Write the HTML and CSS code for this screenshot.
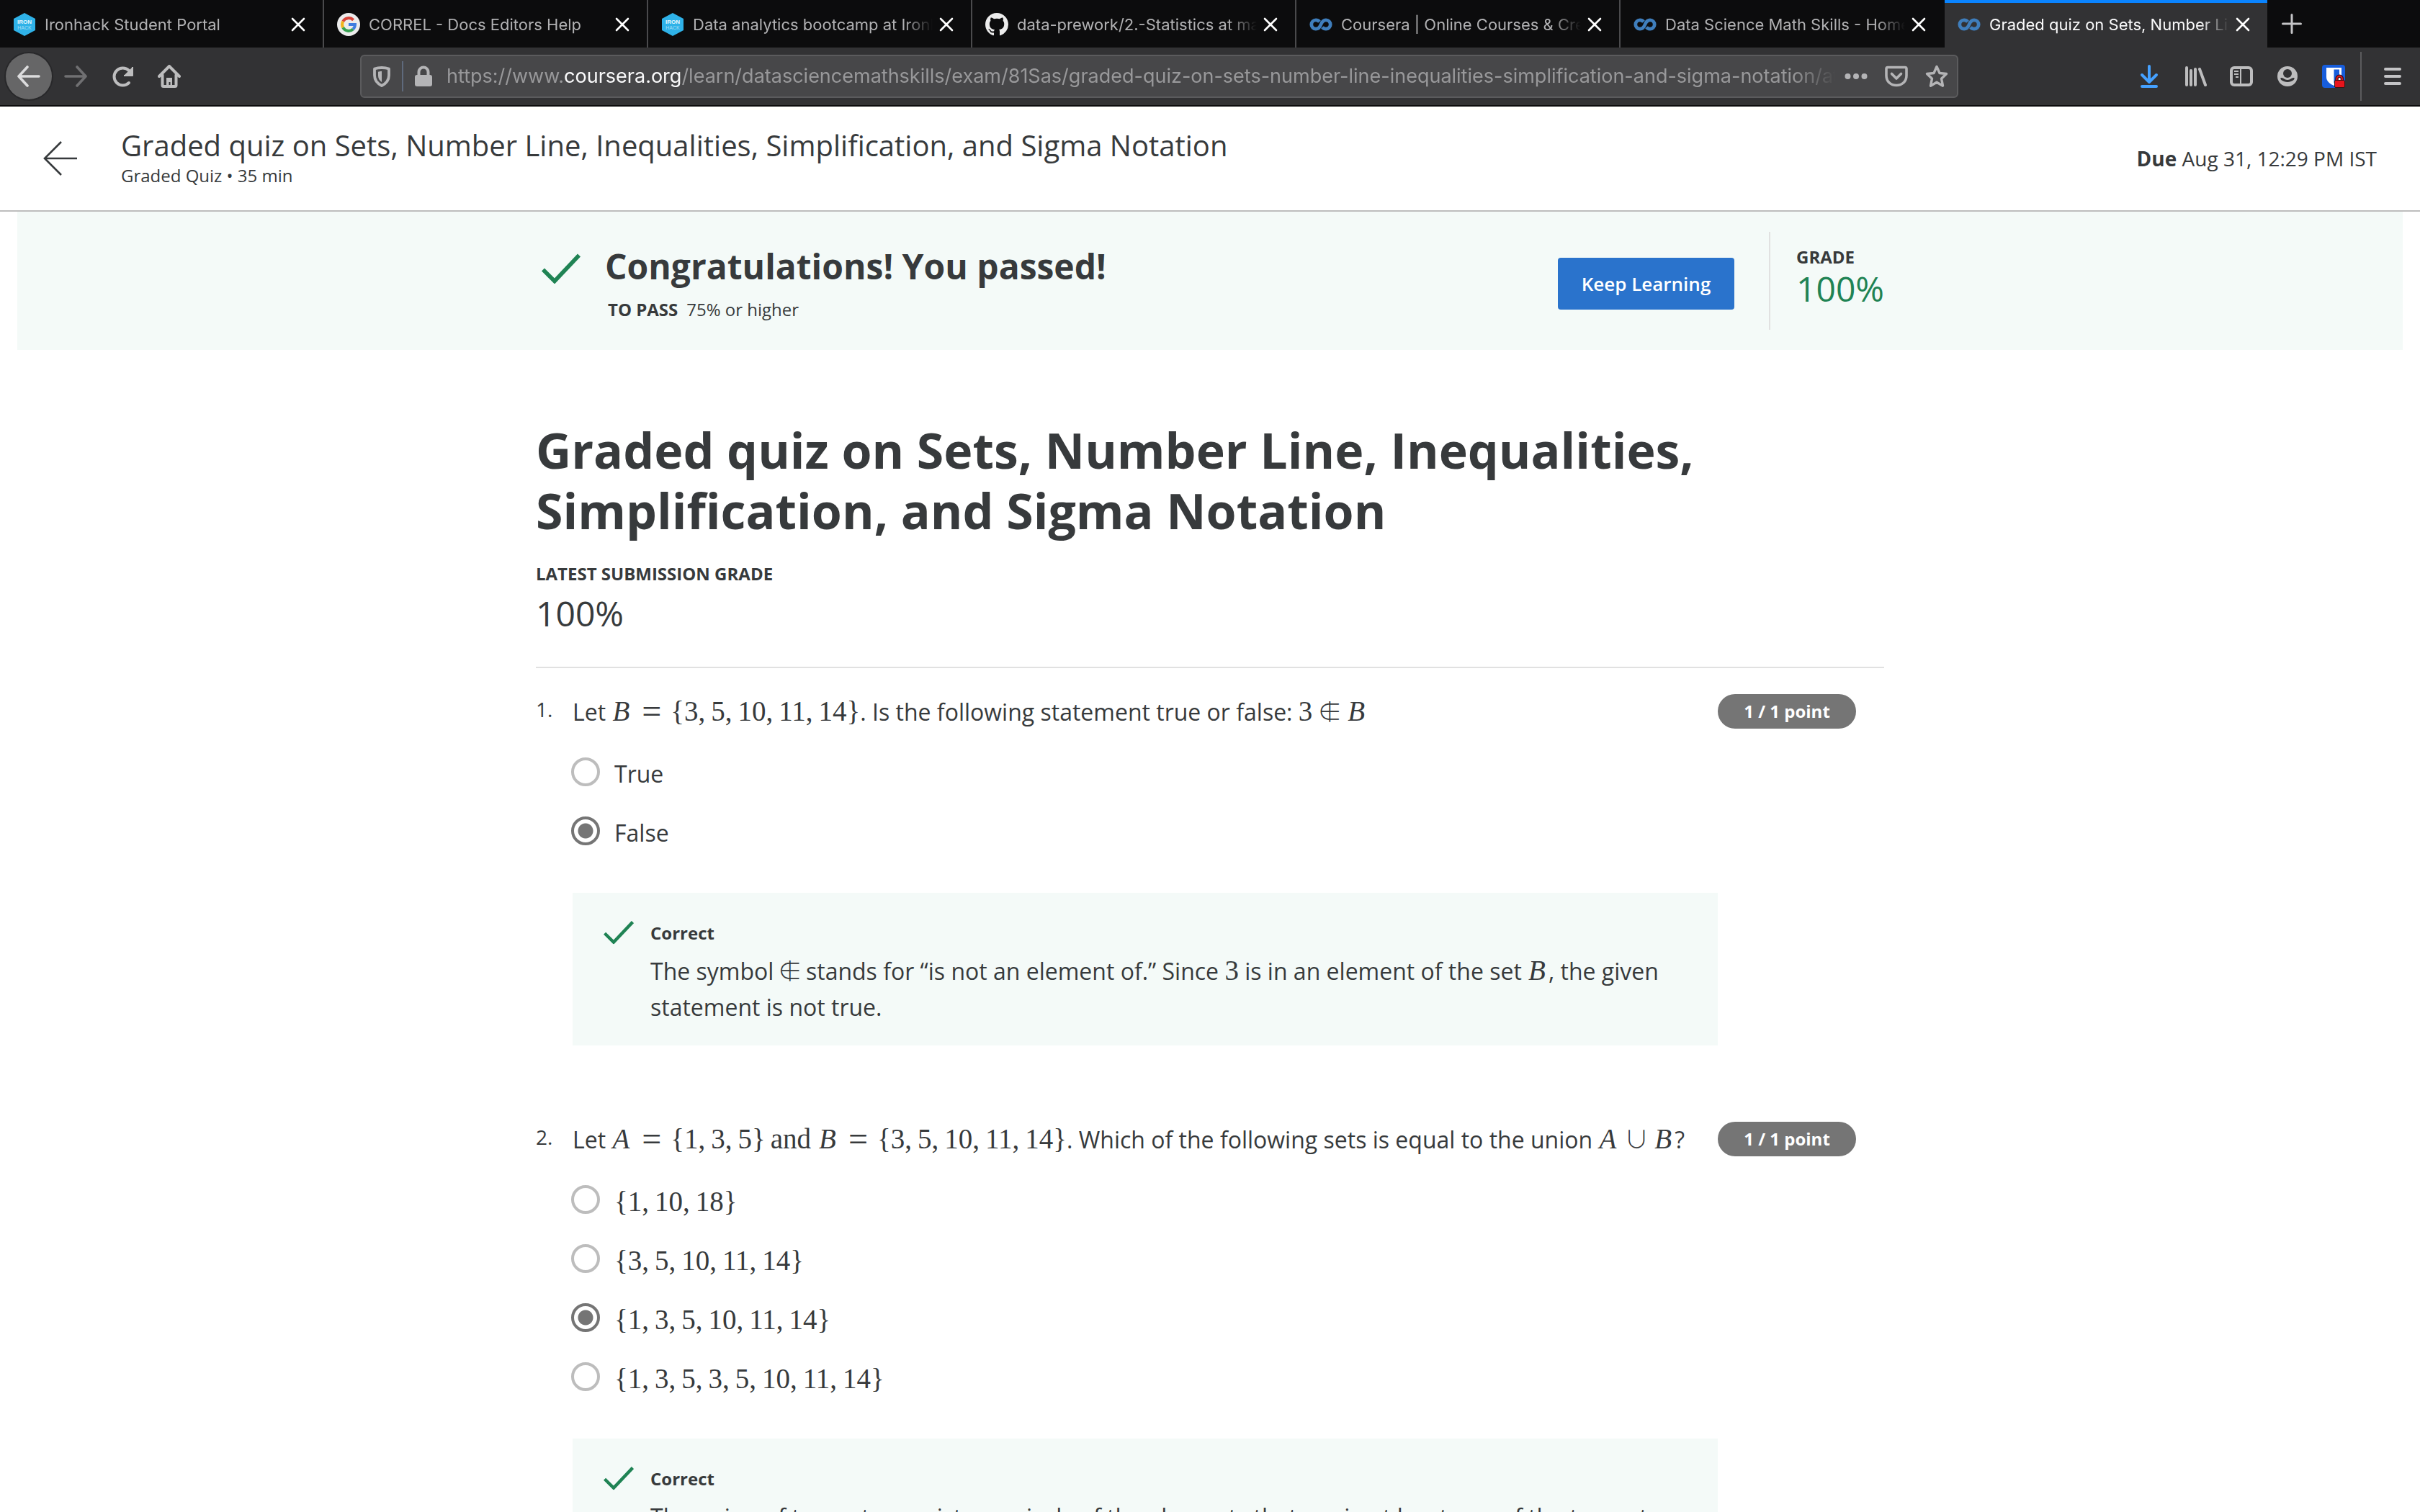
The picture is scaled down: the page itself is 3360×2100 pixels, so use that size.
FILE: index.html
```html
<!DOCTYPE html>
<html lang="en">
<head>
<meta charset="utf-8">
<title>Graded quiz on Sets, Number Line, Inequalities, Simplification, and Sigma Notation</title>
<link rel="stylesheet" href="styles.css">
</head>
<body>
<svg class="sprite" aria-hidden="true">
  <symbol id="close" viewBox="0 0 22 22"><path d="M3 3l16 16M19 3L3 19" fill="none" stroke="#fff" stroke-width="2.6" stroke-linecap="round"/></symbol>
  <symbol id="coursera" viewBox="0 0 32 32"><path d="M14 12.2C12.800 10.700 11 9.800 9 9.800a6.200 6.200 0 1 0 0 12.400c3.500 0 5.500-2.200 7-6.200s3.500-6.200 7-6.200a6.200 6.200 0 1 1 0 12.400c-2 0-3.800-.9-5-2.400" fill="none" stroke="#3f7ebc" stroke-width="4.800"/></symbol>
  <symbol id="check" viewBox="0 0 54 42"><path d="M2 22.500l16 16L52 2.500" fill="none" stroke="#1f8354" stroke-width="5.600"/></symbol>
</svg>

<nav class="tabs" aria-label="Tabs">
  <div class="tab"><svg class="favicon" viewBox="0 0 32 32"><path d="M16 0l15 8v16l-15 8-15-8V8z" fill="#2fb2e8"/><text x="16" y="15" font-size="8" font-weight="700" text-anchor="middle" fill="#e8f7fd">IRON</text><text x="16" y="23" font-size="7" text-anchor="middle" fill="#a5def5">HACK</text></svg><a class="tab-title" href="#t1">Ironhack Student Portal</a><button class="close" aria-label="Close tab"><svg><use href="#close"/></svg></button></div>
  <div class="tab"><svg class="favicon" viewBox="0 0 32 32"><circle cx="16" cy="16" r="16" fill="#ececec"/><g fill="none" stroke-width="4"><path d="M8.200 11.700A9 9 0 0 1 22.600 9.900" stroke="#d9453a"/><path d="M8.200 20.300a9 9 0 0 1 0-8.600" stroke="#f2b41c"/><path d="M22.200 22.500A9 9 0 0 1 8.200 20.300" stroke="#35a150"/><path d="M16 16h9a9 9 0 0 1-2.800 6.500" stroke="#3f7de0"/></g></svg><a class="tab-title" href="#t2">CORREL - Docs Editors Help</a><button class="close" aria-label="Close tab"><svg><use href="#close"/></svg></button></div>
  <div class="tab"><svg class="favicon" viewBox="0 0 32 32"><path d="M16 0l15 8v16l-15 8-15-8V8z" fill="#2fb2e8"/><text x="16" y="15" font-size="8" font-weight="700" text-anchor="middle" fill="#e8f7fd">IRON</text><text x="16" y="23" font-size="7" text-anchor="middle" fill="#a5def5">HACK</text></svg><a class="tab-title" href="#t3">Data analytics bootcamp at Ironhack</a><button class="close" aria-label="Close tab"><svg><use href="#close"/></svg></button></div>
  <div class="tab"><svg class="favicon" viewBox="0 0 16 16"><path fill="#ececec" d="M8 0C3.580 0 0 3.580 0 8c0 3.540 2.290 6.530 5.470 7.590.4.070.55-.17.55-.38 0-.19-.01-.82-.01-1.490-2.010.37-2.530-.49-2.690-.94-.09-.23-.48-.94-.82-1.130-.28-.15-.68-.52-.01-.53.63-.01 1.080.58 1.230.82.72 1.210 1.870.87 2.330.66.070-.52.28-.87.51-1.070-1.780-.2-3.640-.89-3.640-3.950 0-.87.31-1.590.82-2.150-.08-.2-.36-1.020.08-2.120 0 0 .67-.21 2.200.82.64-.18 1.320-.27 2-.27s1.360.090 2 .27c1.530-1.040 2.200-.82 2.200-.82.44 1.100.16 1.920.08 2.120.51.56.82 1.270.82 2.150 0 3.070-1.870 3.750-3.650 3.950.29.25.54.73.54 1.480 0 1.070-.01 1.930-.01 2.200 0 .21.15.46.55.38A8.010 8.010 0 0 0 16 8c0-4.420-3.580-8-8-8z"/></svg><a class="tab-title" href="#t4">data-prework/2.-Statistics at master</a><button class="close" aria-label="Close tab"><svg><use href="#close"/></svg></button></div>
  <div class="tab"><svg class="favicon"><use href="#coursera"/></svg><a class="tab-title" href="#t5">Coursera | Online Courses &amp; Credentials</a><button class="close" aria-label="Close tab"><svg><use href="#close"/></svg></button></div>
  <div class="tab"><svg class="favicon"><use href="#coursera"/></svg><a class="tab-title" href="#t6">Data Science Math Skills - Home</a><button class="close" aria-label="Close tab"><svg><use href="#close"/></svg></button></div>
  <div class="tab active"><svg class="favicon"><use href="#coursera"/></svg><a class="tab-title" href="#t7">Graded quiz on Sets, Number Line</a><button class="close" aria-label="Close tab"><svg><use href="#close"/></svg></button></div>
  <button class="new-tab" aria-label="New tab"><svg viewBox="0 0 28 28"><path d="M14 1.500v25M1.500 14h25" stroke="#c4c4c6" stroke-width="3" stroke-linecap="round"/></svg></button>
</nav>

<div class="toolbar">
  <div class="tools nav-tools">
    <button class="tool back" aria-label="Back"><svg viewBox="0 0 32 32"><path d="M30 16H2M14 3L2 16l12 13" fill="none" stroke="#dcdcdd" stroke-width="3.600" stroke-linecap="round" stroke-linejoin="round"/></svg></button>
    <button class="tool" aria-label="Forward"><svg viewBox="0 0 32 32"><path d="M2 16h28M18 3l12 13-12 13" fill="none" stroke="#707072" stroke-width="3.600" stroke-linecap="round" stroke-linejoin="round"/></svg></button>
    <button class="tool" aria-label="Reload"><svg viewBox="0 0 32 32"><path d="M25 25a12 12 0 1 1 0-17l3 4" fill="none" stroke="#bdbdbe" stroke-width="4" stroke-linecap="round"/><path d="M30 3v12H18" fill="#bdbdbe" stroke="#bdbdbe" stroke-width="2" stroke-linejoin="round"/></svg></button>
    <button class="tool" aria-label="Home"><svg viewBox="0 0 32 32"><path d="M2 16L16 2l14 14M6.500 14v14.500q0 1.500 1.500 1.500h16q1.500 0 1.500-1.500V14" fill="none" stroke="#bdbdbe" stroke-width="4" stroke-linecap="round" stroke-linejoin="round"/><path d="M12 30V18h8v12h-2.500v-6h-2v6z" fill="#bdbdbe"/></svg></button>
  </div>
  <div class="urlbar">
    <svg class="url-icon" viewBox="0 0 32 32"><path d="M16 4c4 0 7 .5 10 1.500v9c0 7-4 11.500-10 14.500-6-3-10-7.500-10-14.500v-9C9 4.500 12 4 16 4z" fill="none" stroke="#b4b4b6" stroke-width="3.800" stroke-linejoin="round"/><path d="M16 9c-2 0-4 .3-5 .8V15c0 4 2 7 5 9z" fill="#b4b4b6"/></svg>
    <span class="url-rule"></span>
    <svg class="url-icon" viewBox="0 0 32 32"><rect x="4" y="14" width="24" height="16" rx="3" fill="#b4b4b6"/><path d="M9.500 15V10a6.500 6.500 0 0 1 13 0v5" fill="none" stroke="#b4b4b6" stroke-width="4"/></svg>
    <div class="url" role="textbox" aria-label="Address" contenteditable="true" spellcheck="false">https://www.<span class="host">coursera.org</span>/learn/datasciencemathskills/exam/81Sas/graded-quiz-on-sets-number-line-inequalities-simplification-and-sigma-notation/attempt</div>
    <button class="url-tool" aria-label="Page actions"><svg viewBox="0 0 32 32" fill="#b4b4b6"><circle cx="4.500" cy="16" r="4"/><circle cx="16" cy="16" r="4"/><circle cx="27.500" cy="16" r="4"/></svg></button>
    <button class="url-tool" aria-label="Save to Pocket"><svg viewBox="0 0 32 32" fill="none" stroke="#b4b4b6" stroke-width="3.600" stroke-linejoin="round" stroke-linecap="round"><path d="M4 3.500h24q2 0 2 2V15c0 8-6 13.500-14 13.500S2 23 2 15V5.500q0-2 2-2z"/><path d="M9.500 12.500l6.500 6.500 6.500-6.500"/></svg></button>
    <button class="url-tool" aria-label="Bookmark"><svg viewBox="0 0 32 32"><path d="M16 2.500l4 9 9.500 1-7 6.700 2 10L16 24.200l-8.500 5 2-10-7-6.700 9.500-1z" fill="none" stroke="#b4b4b6" stroke-width="3.400" stroke-linejoin="round"/></svg></button>
  </div>
  <div class="tools">
    <button class="tool" aria-label="Downloads"><svg viewBox="0 0 32 32"><path d="M16 2v22M6 14l10 10 10-10M6 30h20" fill="none" stroke="#45a1ff" stroke-width="4" stroke-linecap="round" stroke-linejoin="round"/></svg></button>
    <button class="tool" aria-label="Library"><svg viewBox="0 0 32 32"><path d="M4 4v24M10 8v20M16 6v22M22 6l8 22" fill="none" stroke="#bdbdbe" stroke-width="4" stroke-linecap="round"/></svg></button>
    <button class="tool" aria-label="Sidebars"><svg viewBox="0 0 32 32"><rect x="2" y="4" width="28" height="24" rx="4" fill="none" stroke="#bdbdbe" stroke-width="4"/><path d="M15 4v24" stroke="#bdbdbe" stroke-width="2"/><path d="M6 9h6M6 13h6M8 17h4" stroke="#bdbdbe" stroke-width="2"/></svg></button>
    <button class="tool" aria-label="Account"><svg viewBox="0 0 32 32"><circle cx="16" cy="16" r="14" fill="#bdbdbe"/><circle cx="16" cy="12" r="6" fill="#323234"/><path d="M7.500 18c3.500 0 4 3 8.500 3s5-3 8.500-3c2 0 1 2.500-.5 3.500-2.200 1.600-5 2.500-8 2.500s-5.800-.9-8-2.500c-1.500-1-2.500-3.500-.5-3.500z" fill="#323234"/></svg></button>
    <button class="tool" aria-label="Password manager"><svg viewBox="0 0 32 32"><rect width="32" height="32" rx="4" fill="#175ddc"/><path d="M6 4h21v13c0 6-5 9.500-10.500 12C11 26.500 6 23 6 17z" fill="#fff"/><path d="M16.500 6.500h7.500V17c0 4-3 6.500-7.500 8.500z" fill="#175ddc"/><path d="M20.500 22v-2.500a3.700 3.700 0 0 1 7.400 0V22" fill="#fff" stroke="#3a1414" stroke-width="4.500"/><path d="M20.500 22v-2.500a3.700 3.700 0 0 1 7.400 0V22" fill="none" stroke="#e8141c" stroke-width="2"/><rect x="17.500" y="21.500" width="14" height="10" rx="1.500" fill="#e8141c" stroke="#3a1414"/></svg></button>
    <span class="tool-rule"></span>
    <button class="tool" aria-label="Open menu"><svg viewBox="0 0 32 32"><path d="M6 6h20M6 16h20M6 26h20" stroke="#c4c4c6" stroke-width="4" stroke-linecap="round"/></svg></button>
  </div>
</div>

<header class="page-head">
  <a class="head-back" href="#back" aria-label="Back"><svg viewBox="0 0 48 48"><path d="M47 24H2M25 1L2 24l23 23" fill="none" stroke="#373a3c" stroke-width="2.600"/></svg></a>
  <div class="head-text">
    <div class="head-title">Graded quiz on Sets, Number Line, Inequalities, Simplification, and Sigma Notation</div>
    <div class="head-sub">Graded Quiz • 35 min</div>
  </div>
  <div class="due"><b>Due</b> Aug 31, 12:29 PM IST</div>
</header>

<main>
  <section class="banner">
    <div class="banner-inner">
      <svg class="banner-check"><use href="#check"/></svg>
      <div class="banner-text">
        <h2>Congratulations! You passed!</h2>
        <p><b>TO PASS</b><span>75% or higher</span></p>
      </div>
      <button class="keep">Keep Learning</button>
      <div class="grade"><b>GRADE</b><span>100%</span></div>
    </div>
  </section>

  <article class="quiz">
    <h1>Graded quiz on Sets, Number Line, Inequalities, Simplification, and Sigma Notation</h1>
    <div class="latest">LATEST SUBMISSION GRADE</div>
    <div class="score">100%</div>

    <section class="question">
      <div class="num">1.</div>
      <div class="body">
        <div class="prompt">Let <span class="math"><i>B</i><span class="rel">=</span>{3<s>,</s>5<s>,</s>10<s>,</s>11<s>,</s>14}</span>. Is the following statement true or false: <span class="math">3<span class="sym">∉</span><i>B</i></span></div>
        <div class="options">
          <label><input type="radio" name="q1"><span>True</span></label>
          <label><input type="radio" name="q1" checked><span>False</span></label>
        </div>
        <div class="feedback">
          <svg class="fb-check" viewBox="0 0 54 42"><use href="#check"/></svg>
          <div><b>Correct</b><p>The symbol <span class="math"><span class="sym bare">∉</span></span> stands for “is not an element of.” Since <span class="math">3</span> is in an element of the set <span class="math"><i>B</i></span>, the given statement is not true.</p></div>
        </div>
      </div>
      <div class="points">1 / 1 point</div>
    </section>

    <section class="question">
      <div class="num">2.</div>
      <div class="body">
        <div class="prompt">Let <span class="math"><i>A</i><span class="rel">=</span>{1<s>,</s>3<s>,</s>5}<span class="word">and</span><i>B</i><span class="rel">=</span>{3<s>,</s>5<s>,</s>10<s>,</s>11<s>,</s>14}</span>. Which of the following sets is equal to the union <span class="math"><i>A</i><span class="sym">∪</span><i>B</i></span>?</div>
        <div class="options">
          <label><input type="radio" name="q2"><span class="math">{1<s>,</s>10<s>,</s>18}</span></label>
          <label><input type="radio" name="q2"><span class="math">{3<s>,</s>5<s>,</s>10<s>,</s>11<s>,</s>14}</span></label>
          <label><input type="radio" name="q2" checked><span class="math">{1<s>,</s>3<s>,</s>5<s>,</s>10<s>,</s>11<s>,</s>14}</span></label>
          <label><input type="radio" name="q2"><span class="math">{1<s>,</s>3<s>,</s>5<s>,</s>3<s>,</s>5<s>,</s>10<s>,</s>11<s>,</s>14}</span></label>
        </div>
        <div class="feedback">
          <svg class="fb-check" viewBox="0 0 54 42"><use href="#check"/></svg>
          <div><b>Correct</b><p>The union of two sets consists precisely of the elements that are in at least one of the two sets.</p></div>
        </div>
      </div>
      <div class="points">1 / 1 point</div>
    </section>
  </article>
</main>
</body>
</html>
```
FILE: styles.css
```css
* { box-sizing: border-box; }
body {
  margin: 0;
  height: 100vh;
  overflow: hidden;
  display: flex;
  flex-direction: column;
  background: #fff;
  color: #373a3c;
  font-family: "Open Sans", sans-serif;
  font-size: 32px;
}
button { border: 0; padding: 0; background: none; font: inherit; display: flex; align-items: center; justify-content: center; }
a { color: inherit; text-decoration: none; }
h1, h2, p { margin: 0; }
svg { display: block; }
.sprite { position: absolute; width: 0; height: 0; }

/* Browser tabs */
.tabs { flex: none; display: flex; height: 66px; background: #0c0c0d; font-family: Inter, sans-serif; font-size: 22px; color: #b1b1b3; }
.tab { flex: 0 1 450px; min-width: 0; display: flex; align-items: center; padding: 2px 23px 0 18px; border-right: 2px solid #4a4a4c; }
.tab:nth-child(6) { border-right-color: #0c0c0d; }
.tab.active { flex-basis: 448px; background: #323234; color: #f9f9fa; border-right: 0; border-top: 4px solid #0a84ff; padding-top: 0; padding-bottom: 2px; }
.favicon { flex: none; width: 32px; height: 32px; font-family: "Liberation Sans", sans-serif; }
.tab-title { flex: 1; min-width: 0; margin: 0 8px 0 12px; overflow: hidden; white-space: nowrap; line-height: 32px; -webkit-mask-image: linear-gradient(to left, transparent, #000 40px); mask-image: linear-gradient(to left, transparent, #000 40px); }
.close svg { width: 22px; height: 22px; }
.new-tab { width: 68px; }
.new-tab svg { width: 28px; height: 28px; }

/* Browser toolbar */
.toolbar { flex: none; display: flex; align-items: center; height: 82px; padding: 0 6px 0 8px; background: #323234; border-bottom: 2px solid #0c0c0d; }
.tools { flex: none; display: flex; align-items: center; }
.nav-tools { gap: 1px; }
.tool { width: 64px; height: 64px; }
.tool svg { width: 32px; height: 32px; }
.back { border-radius: 50%; background: #666667; box-shadow: 0 0 0 2px #28282a; }
.tool-rule { width: 2px; height: 68px; margin: 0 11px 0 5px; background: #5b5b5d; }
.urlbar { flex: 1; min-width: 0; display: flex; align-items: center; height: 60px; margin: 0 233px; padding: 0 12px; background: #474749; border: 2px solid #5b5b5d; border-radius: 6px; }
.url-icon { flex: none; width: 32px; height: 32px; }
.url-rule { flex: none; width: 2px; height: 42px; margin: 0 12px; background: #5f6a7c; }
.url { flex: 1; min-width: 0; margin: 0 12px 0 16px; overflow: hidden; white-space: nowrap; font-family: Inter, sans-serif; font-size: 27px; line-height: 40px; color: #98989a; -webkit-mask-image: linear-gradient(to left, transparent, #000 60px); mask-image: linear-gradient(to left, transparent, #000 60px); }
.host { color: #f9f9fa; }
.url-tool { flex: none; width: 32px; height: 32px; margin-left: 24px; }
.url-tool svg { width: 32px; height: 32px; }
.url + .url-tool { margin-left: 0; }

/* Quiz header */
.page-head { flex: none; display: flex; align-items: center; height: 146px; padding: 0 60px; border-bottom: 2px solid #bdbdbd; }
.head-back svg { width: 48px; height: 48px; }
.head-text { flex: 1; margin: 0 0 4px 60px; }
.head-title { font-size: 40px; line-height: 52px; }
.head-sub { font-size: 24px; line-height: 32px; }
.due { font-size: 28px; }

/* Result banner */
main { flex: 1; min-height: 0; overflow: hidden; }
.banner { margin: 0 24px; background: #f4faf8; }
.banner-inner { display: flex; align-items: center; max-width: 1872px; height: 192px; margin: 0 auto; padding-left: 8px; }
.banner-check { flex: none; width: 54px; height: 42px; margin-bottom: 34px; }
.banner-text { flex: 1; margin-left: 34px; padding-top: 16px; }
.banner-text h2 { font-size: 48px; line-height: 64px; }
.banner-text p { display: flex; gap: 12px; font-size: 24px; line-height: 56px; padding-left: 4px; }
.keep { width: 245px; height: 72px; margin: 8px 48px 0 0; border-radius: 4px; background: #2a73cc; color: #fff; font-size: 26px; font-weight: 600; }
.grade { display: flex; flex-direction: column; justify-content: center; width: 160px; height: 136px; padding: 0 0 10px 36px; border-left: 2px solid #e1e1e1; }
.grade b { font-size: 24px; line-height: 32px; }
.grade span { font-size: 48px; line-height: 56px; color: #1f8354; }

/* Quiz body */
.quiz { max-width: 1872px; margin: 0 auto; padding-top: 97px; }
h1 { font-size: 68px; line-height: 84px; }
.latest { margin-top: 26px; font-size: 24px; line-height: 40px; font-weight: 700; }
.score { padding-bottom: 39px; border-bottom: 2px solid #e1e1e1; font-size: 48px; line-height: 70px; }
.question { display: grid; grid-template-columns: 51px 1fr 231px; align-items: start; margin-top: 36px; }
.question + .question { margin-top: 106px; }
.num { font-size: 28px; line-height: 42px; }
.prompt, .feedback p { line-height: 50px; }
.prompt { margin-right: -39px; }
.points { width: 192px; height: 48px; border-radius: 24px; background: #757575; color: #fff; font-size: 24px; line-height: 48px; font-weight: 700; text-align: center; }
.options { display: flex; flex-direction: column; align-items: flex-start; gap: 36px; margin-top: 38px; }
.options label { display: flex; align-items: flex-start; gap: 20px; height: 46px; line-height: 46px; }
.options input { appearance: none; width: 40px; height: 40px; margin: 0 0 0 -2px; border: 4px solid #bdbdbd; border-radius: 50%; background: #fff; }
.options input:checked { border-color: #757575; background: radial-gradient(circle, #757575 10px, #fff 11px); }
.feedback { display: flex; gap: 23px; margin-top: 60px; padding: 38px 43px 28px; background: #f4faf8; }
.fb-check { flex: none; width: 42px; height: 34px; }
.feedback b { display: block; margin-bottom: 10px; font-size: 24px; line-height: 36px; }

/* Inline maths */
.math { font-family: "Liberation Serif", serif; font-size: 39px; }
.prompt .math, .feedback .math { line-height: 39px; }
.math i { margin: 0 4px 0 1px; }
.math s { margin-right: 8px; text-decoration: none; }
.rel { margin: 0 13px; font-size: 48px; line-height: 39px; vertical-align: -3px; }
.sym { margin: 0 7px; font-family: "Noto Sans CJK JP", sans-serif; font-size: 34px; font-weight: 300; line-height: 39px; }
.bare { margin: 0 -3px; }
.word { margin: 0 10px 0 7px; }
```
